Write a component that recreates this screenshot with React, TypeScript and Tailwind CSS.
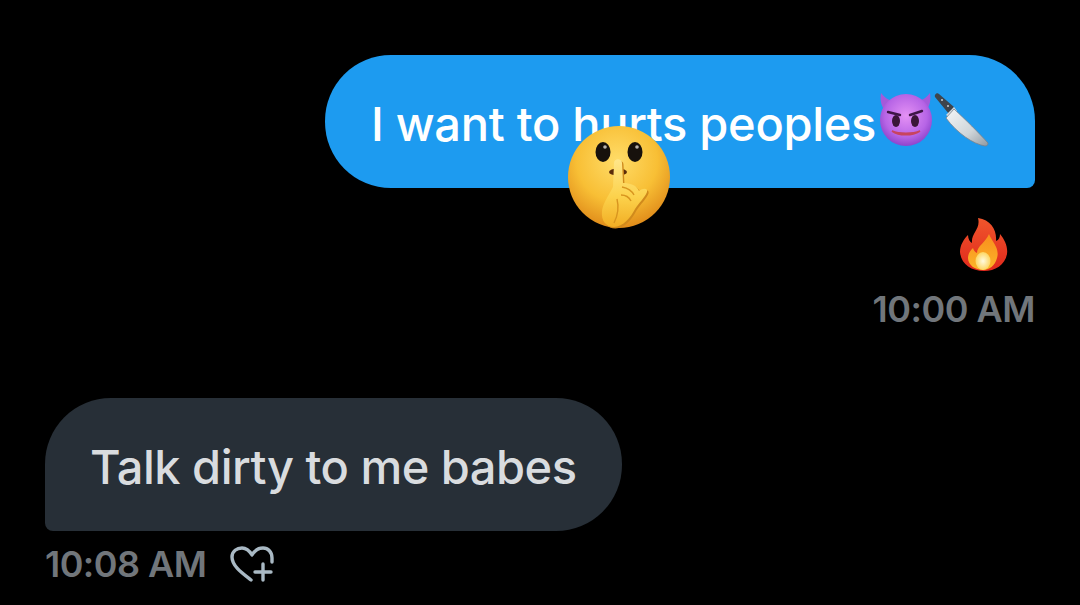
import React from 'react';

const HAND_PATH =
  'M47 38 C47 33 55 33 55 38 L56 58 C62 58 70 60 72 66 C76 63 81 63 80 67 C78 72 72 78 68 84 C64 92 56 102 47 102 C39 102 34 96 35 86 C36 78 42 70 46 62 Z';

// Emoji drawings: no emoji font is available, so these are inline SVG
function ShushEmoji() {
  return (
    <svg width="104" height="104" viewBox="0 0 104 104">
      <defs>
        <radialGradient id="shushFace" cx="48%" cy="34%" r="66%">
          <stop offset="0%" stopColor="#ffdc68" />
          <stop offset="60%" stopColor="#f8bf35" />
          <stop offset="100%" stopColor="#e08c1a" />
        </radialGradient>
        <linearGradient id="shushHand" x1="0" y1="0" x2="0" y2="1">
          <stop offset="0%" stopColor="#ffe68a" />
          <stop offset="55%" stopColor="#fcd24c" />
          <stop offset="100%" stopColor="#f2ae24" />
        </linearGradient>
      </defs>
      <circle cx="52" cy="52" r="51" fill="url(#shushFace)" />
      <ellipse cx="36" cy="27" rx="7.5" ry="10" fill="#17110c" />
      <ellipse cx="68" cy="27" rx="7.5" ry="10" fill="#17110c" />
      <circle cx="38" cy="22" r="1.8" fill="#b9b3ad" />
      <circle cx="70" cy="22" r="1.8" fill="#b9b3ad" />
      <ellipse cx="51" cy="47" rx="9" ry="3.6" fill="#5a2c0a" />
      <path d={HAND_PATH} fill="#d08a1c" transform="translate(1.5 1.5)" />
      <path d={HAND_PATH} fill="url(#shushHand)" />
      <path d="M55 62 C60 63 65 66 67 70 M54 70 C58 70 62 72 64 76 M50 74 C52 82 51 90 47 98" fill="none" stroke="#d8951f" strokeWidth="1.4" />
    </svg>
  );
}

function DevilEmoji() {
  return (
    <svg width="56" height="56" viewBox="0 0 56 56" className="shrink-0">
      <defs>
        <radialGradient id="devilFace" cx="50%" cy="42%" r="58%">
          <stop offset="0%" stopColor="#e491f4" />
          <stop offset="70%" stopColor="#b765e6" />
          <stop offset="100%" stopColor="#8e44cc" />
        </radialGradient>
      </defs>
      <path d="M3 1 C2 8 3 14 7 18 L15 9 C10 8 6 5 3 1 Z" fill="#a55ada" />
      <path d="M52 1 C53 8 52 14 48 18 L40 9 C45 8 49 5 52 1 Z" fill="#a55ada" />
      <circle cx="28" cy="28" r="26" fill="url(#devilFace)" />
      <ellipse cx="18" cy="29" rx="4" ry="6" fill="#3a1638" />
      <ellipse cx="37" cy="29" rx="4" ry="6" fill="#3a1638" />
      <path d="M10 20 L22 23 M44 19 L32 23" stroke="#3f1648" strokeWidth="2.4" strokeLinecap="round" fill="none" />
      <path d="M14 39 C21 44 34 44 42 39 C35 42 21 42 14 39 Z" fill="#7a2448" stroke="#c8445f" strokeWidth="1.6" />
    </svg>
  );
}

function KnifeEmoji() {
  return (
    <svg width="58" height="58" viewBox="0 0 58 58" className="shrink-0 -ml-px">
      <defs>
        <linearGradient id="knifeBlade" x1="0" y1="0" x2="1" y2="1">
          <stop offset="0%" stopColor="#f4f6f7" />
          <stop offset="60%" stopColor="#cfd5d9" />
          <stop offset="100%" stopColor="#8f99a1" />
        </linearGradient>
      </defs>
      <path d="M2 6 C1 4 4 1 6 3 L21 16 L16 23 Z" fill="#3e454c" />
      <circle cx="9" cy="9" r="1" fill="#c8cdd1" />
      <circle cx="15" cy="15" r="1" fill="#c8cdd1" />
      <path d="M21 16 L24 20 L18 27 L13 24 Z" fill="#d6dade" />
      <path d="M21 18 C32 28 46 42 55 52 C55 54 54 55 52 55 C40 53 24 42 13 27 Z" fill="url(#knifeBlade)" stroke="#77828b" strokeWidth="0.8" />
    </svg>
  );
}

function FireEmoji() {
  return (
    <svg width="50" height="54" viewBox="0 0 50 54">
      <defs>
        <linearGradient id="fireOuter" x1="0" y1="0" x2="0" y2="1">
          <stop offset="0%" stopColor="#f0562c" />
          <stop offset="100%" stopColor="#e0281c" />
        </linearGradient>
        <linearGradient id="fireMid" x1="0" y1="0" x2="0" y2="1">
          <stop offset="0%" stopColor="#f98d1c" />
          <stop offset="100%" stopColor="#fbb62a" />
        </linearGradient>
        <radialGradient id="fireCore">
          <stop offset="0%" stopColor="#fffbe0" />
          <stop offset="100%" stopColor="#fdd662" />
        </radialGradient>
      </defs>
      <path
        d="M19 0 C32 2 38 12 37 23 C40 22 41 19 41 16 C46 22 49 29 48 36 C46 47 36 53 25 53 C12 53 2 46 1 34 C1 27 5 21 9 17 C9 21 11 24 13 25 C12 15 22 11 19 0 Z"
        fill="url(#fireOuter)"
      />
      <path d="M30 16 C33 24 41 30 38 40 C36 48 30 52 24 52 C16 52 9 47 9 40 C9 36 11 33 14 30 C15 33 16 34 18 35 C18 28 27 24 30 16 Z" fill="url(#fireMid)" />
      <ellipse cx="24" cy="43" rx="7.5" ry="9" fill="url(#fireCore)" />
    </svg>
  );
}

function HeartPlusIcon() {
  return (
    <svg width="44" height="38" viewBox="0 0 44 38" fill="none" stroke="#a9b9c4" strokeWidth="3.4" strokeLinecap="round" strokeLinejoin="round">
      <path d="M21 35 C12 28 2 21 2 12 C2 6 7 3 12 3 C16 3 19 5 22 10 C25 5 28 3 33 3 C38 3 42 7 42 13 V17" />
      <path d="M33 19 V35 M25 27 H41" />
    </svg>
  );
}

export default function App() {
  return (
    <div
      className="h-[605px] w-[1080px] overflow-hidden bg-black px-[45px] pt-[55px] text-[47px] font-medium leading-none"
      style={{ fontFamily: 'Inter, "Liberation Sans", sans-serif' }}
    >
      {/* Outgoing message */}
      <div className="flex flex-col items-end">
        <div className="relative flex h-[133px] w-[710px] items-center rounded-[66px] rounded-br-[8px] bg-[#1d9bf0] pl-[46px] pt-[4px]">
          <span className="w-[507px] shrink-0 whitespace-nowrap tracking-[-0.3px] text-white">I want to hurts peoples</span>
          <div className="-mt-[8px] flex items-center">
            <DevilEmoji />
            <KnifeEmoji />
          </div>
          <div className="absolute left-[242px] top-[70px]">
            <ShushEmoji />
          </div>
        </div>
        <div className="mt-[30px] mr-[26px]">
          <FireEmoji />
        </div>
        <div className="mt-[19px] text-[36px] font-semibold tracking-[-0.5px] text-[#71767b]">10:00 AM</div>
      </div>

      {/* Incoming message */}
      <div className="mt-[71px] flex h-[133px] w-[577px] items-center rounded-[66px] rounded-bl-[8px] bg-[#272f37] pl-[45px] pt-[4px]">
        <span className="tracking-[-0.5px] text-[#d9dcdf]">Talk dirty to me babes</span>
      </div>
      <div className="mt-[14px] flex items-center gap-[24px] text-[36px] font-semibold tracking-[-0.55px] text-[#71767b]">
        <span>10:08 AM</span>
        <HeartPlusIcon />
      </div>
    </div>
  );
}
